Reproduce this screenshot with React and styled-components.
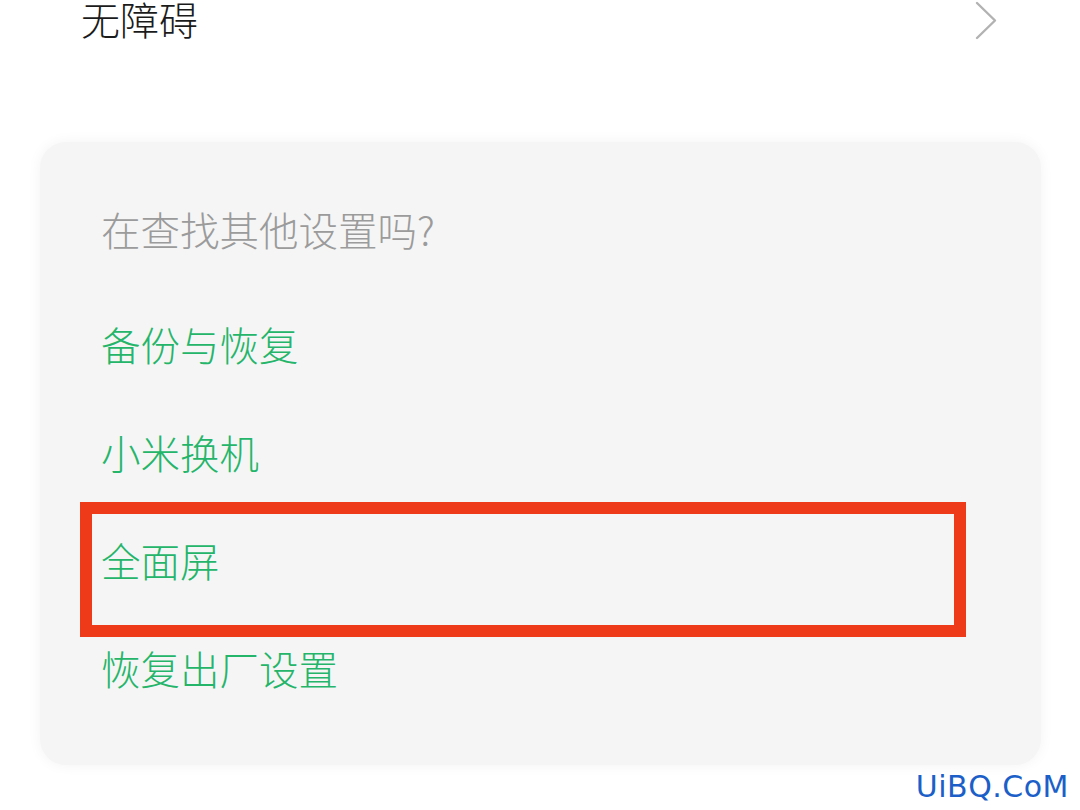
import React from 'react';
import styled, { createGlobalStyle } from 'styled-components';

const GlobalStyle = createGlobalStyle`
  html, body {
    margin: 0;
    padding: 0;
    background: #ffffff;
    overflow: hidden;
  }
  body {
    font-family: "Noto Sans CJK SC", "Noto Sans", sans-serif;
  }
`;

const links = ['备份与恢复', '小米换机', '全面屏', '恢复出厂设置'];

const App = () => (
  <Page>
    <GlobalStyle />
    <NavRow>
      <NavTitle>无障碍</NavTitle>
      <Chevron viewBox="0 0 24 40" aria-hidden="true">
        <path d="M3 3 L21 20.5 L3 38" />
      </Chevron>
    </NavRow>
    <Card>
      <Hint>在查找其他设置吗?</Hint>
      {links.map(label => (
        <LinkRow key={label}>
          {label}
          {label === '全面屏' && <Highlight />}
        </LinkRow>
      ))}
    </Card>
    <Footer>
      <Watermark>UiBQ.CoM</Watermark>
    </Footer>
  </Page>
);

const Page = styled.div`
  width: 1080px;
  height: 810px;
  display: flex;
  flex-direction: column;
`;

const NavRow = styled.div`
  height: 40px;
  display: flex;
  align-items: flex-start;
  justify-content: space-between;
  padding: 0 82px 0 81px;
`;

const NavTitle = styled.span`
  font-size: 39px;
  font-weight: 300;
  line-height: 36px;
  color: #1b1b1b;
`;

const Chevron = styled.svg`
  width: 24px;
  height: 40px;
  fill: none;
  stroke: #b2b2b2;
  stroke-width: 2.4;
  stroke-linecap: round;
  stroke-linejoin: round;
`;

const Card = styled.div`
  margin: 102px 39px 0 40px;
  background: #f5f5f5;
  border-radius: 26px;
  box-shadow: 0 0 14px rgba(0, 0, 0, 0.05);
  padding: 0 0 43px;
  display: flex;
  flex-direction: column;
`;

const Hint = styled.div`
  margin-top: 26px;
  height: 122px;
  line-height: 122px;
  padding-left: 61px;
  font-size: 39.5px;
  font-weight: 300;
  color: #9b9b9b;
`;

const LinkRow = styled.div`
  position: relative;
  height: 108px;
  line-height: 108px;
  padding-left: 61px;
  font-size: 39.5px;
  font-weight: 300;
  color: #25b56a;
`;

const Highlight = styled.div`
  position: absolute;
  left: 40px;
  top: -4px;
  width: 862px;
  height: 111px;
  border: 12px solid #ef3a19;
`;

const Footer = styled.div`
  display: flex;
  justify-content: flex-end;
  padding: 4px 11px 0 0;
`;

const Watermark = styled.span`
  font-family: "DejaVu Sans", Verdana, sans-serif;
  font-size: 30px;
  line-height: 36px;
  color: #1c5fc9;
  letter-spacing: 0.5px;
`;

export default App;
